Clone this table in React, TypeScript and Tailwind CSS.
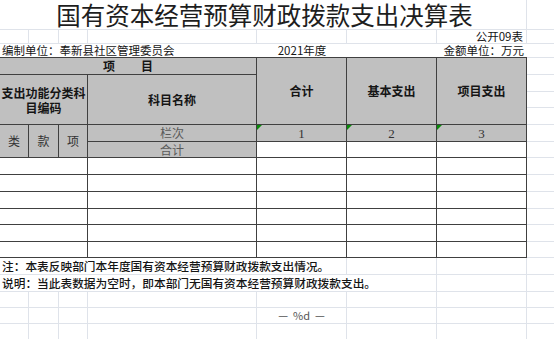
import React from "react";

const L = "border-[#dfe3ea]";
const D = "border-[#404040]";

function GridRow({ h, children }: { h: string; children?: React.ReactNode }) {
  return <div className={`flex ${h}`}>{children}</div>;
}

function Plain({ w, last }: { w: string; last?: boolean }) {
  return <div className={`${w} shrink-0 border-b ${last ? "" : "border-r"} border-[#dfe3ea]`} />;
}

function BlankRow({ h }: { h: string }) {
  return (
    <GridRow h={h}>
      <Plain w="w-[29px]" />
      <Plain w="w-[30px]" />
      <Plain w="w-[29px]" />
      <Plain w="w-[169px]" />
      <Plain w="w-[90px]" />
      <Plain w="w-[90px]" />
      <Plain w="w-[90px]" />
      <Plain w="w-[27px]" last />
    </GridRow>
  );
}

function DataRow({ h }: { h: string }) {
  return (
    <div className={`flex ${h}`}>
      <div className="w-[88px] shrink-0 border-r border-b border-[#404040]" />
      <div className="w-[169px] shrink-0 border-r border-b border-[#404040]" />
      <div className="w-[90px] shrink-0 border-r border-b border-[#404040]" />
      <div className="w-[90px] shrink-0 border-r border-b border-[#404040]" />
      <div className="w-[90px] shrink-0 border-r border-b border-[#404040]" />
      <div className="w-[27px] shrink-0 border-b border-[#dfe3ea]" />
    </div>
  );
}

function Tri() {
  return (
    <span className="absolute left-0 top-0 w-0 h-0 border-t-[5px] border-r-[5px] border-t-[#0a8a0a] border-r-transparent" />
  );
}

export default function App() {
  return (
    <div className="w-[554px] h-[339px] overflow-hidden bg-white text-[#151515] font-['Noto_Sans_CJK_SC','Noto_Sans',sans-serif] leading-none">
      {/* title */}
      <div className="flex h-[30px]">
        <div className={`w-[527px] shrink-0 border-r border-b ${L} flex items-center justify-center pl-[3px] pt-[1px] text-[24.5px] leading-[28px] text-[#1e1e1e]`}>
          国有资本经营预算财政拨款支出决算表
        </div>
        <div className={`w-[27px] shrink-0 border-b ${L}`} />
      </div>

      {/* 公开09表 */}
      <div className="flex h-[14px] text-[11.5px] leading-[13px]">
        <Plain w="w-[29px]" />
        <Plain w="w-[30px]" />
        <Plain w="w-[29px]" />
        <Plain w="w-[169px]" />
        <Plain w="w-[90px]" />
        <Plain w="w-[90px]" />
        <div className={`w-[90px] shrink-0 border-r border-b ${L} flex items-center justify-end pr-[3px]`}>公开09表</div>
        <Plain w="w-[27px]" last />
      </div>

      {/* 编制单位 */}
      <div className="flex h-[14px] text-[11.5px] leading-[13px]">
        <div className={`w-[257px] shrink-0 border-b ${D} flex items-center pl-[2px] whitespace-nowrap`}>
          编制单位：奉新县社区管理委员会
        </div>
        <div className={`w-[90px] shrink-0 border-b ${D} flex items-center justify-center`}>2021年度</div>
        <div className={`w-[90px] shrink-0 border-b ${D}`} />
        <div className={`w-[90px] shrink-0 border-b ${D} flex items-center justify-end pr-[3px] whitespace-nowrap`}>金额单位：万元</div>
        <div className={`w-[27px] shrink-0 border-b ${L}`} />
      </div>

      {/* header block */}
      <div className="flex h-[100px] text-[12px] font-bold">
        <div className="w-[257px] shrink-0 flex flex-col">
          <div className={`h-[17px] bg-[#c0c0c0] border-r border-b ${D} flex items-center justify-center gap-[26px]`}>
            <span>项</span>
            <span>目</span>
          </div>
          <div className="flex h-[50px]">
            <div className={`w-[88px] shrink-0 bg-[#c0c0c0] border-r border-b ${D} flex items-center justify-center text-center leading-[15px] px-[1px]`}>
              支出功能分类科目编码
            </div>
            <div className={`w-[169px] shrink-0 bg-[#c0c0c0] border-r border-b ${D} flex items-center justify-center`}>
              科目名称
            </div>
          </div>
          <div className="flex h-[33px] font-normal">
            <div className={`w-[29px] shrink-0 bg-[#c0c0c0] border-r border-b ${D} flex items-center justify-center text-[#333]`}>类</div>
            <div className={`w-[30px] shrink-0 bg-[#c0c0c0] border-r border-b ${D} flex items-center justify-center text-[#333]`}>款</div>
            <div className={`w-[29px] shrink-0 bg-[#c0c0c0] border-r border-b ${D} flex items-center justify-center text-[#333]`}>项</div>
            <div className="w-[169px] shrink-0 flex flex-col text-[#5a5a5a]">
              <div className={`h-[17px] bg-[#c0c0c0] border-r border-b ${D} flex items-center justify-center`}>栏次</div>
              <div className={`h-[16px] bg-[#c0c0c0] border-r border-b ${D} flex items-center justify-center`}>合计</div>
            </div>
          </div>
        </div>

        <div className="w-[270px] shrink-0 flex flex-col">
          <div className="flex h-[67px]">
            <div className={`w-[90px] shrink-0 bg-[#c0c0c0] border-r border-b ${D} flex items-center justify-center`}>合计</div>
            <div className={`w-[90px] shrink-0 bg-[#c0c0c0] border-r border-b ${D} flex items-center justify-center`}>基本支出</div>
            <div className={`w-[90px] shrink-0 bg-[#c0c0c0] border-r border-b ${D} flex items-center justify-center`}>项目支出</div>
          </div>
          <div className="flex h-[17px] font-normal text-[#333] font-['Liberation_Serif',serif] text-[13px]">
            <div className={`relative w-[90px] shrink-0 bg-[#c0c0c0] border-r border-b ${D} flex items-center justify-center`}>
              <Tri />1
            </div>
            <div className={`relative w-[90px] shrink-0 bg-[#c0c0c0] border-r border-b ${D} flex items-center justify-center`}>
              <Tri />2
            </div>
            <div className={`relative w-[90px] shrink-0 bg-[#c0c0c0] border-r border-b ${D} flex items-center justify-center`}>
              <Tri />3
            </div>
          </div>
          <div className="flex h-[16px]">
            <div className={`w-[90px] shrink-0 border-r border-b ${D}`} />
            <div className={`w-[90px] shrink-0 border-r border-b ${D}`} />
            <div className={`w-[90px] shrink-0 border-r border-b ${D}`} />
          </div>
        </div>

        <div className="w-[27px] shrink-0 flex flex-col">
          <div className={`h-[17px] border-b ${L}`} />
          <div className={`h-[17px] border-b ${L}`} />
          <div className={`h-[16px] border-b ${L}`} />
          <div className={`h-[17px] border-b ${L}`} />
          <div className={`h-[17px] border-b ${L}`} />
          <div className={`h-[16px] border-b ${L}`} />
        </div>
      </div>

      {/* data rows */}
      <DataRow h="h-[17px]" />
      <DataRow h="h-[17px]" />
      <DataRow h="h-[17px]" />
      <DataRow h="h-[16px]" />
      <DataRow h="h-[17px]" />
      <DataRow h="h-[16px]" />

      {/* notes */}
      <div className="flex h-[17px] text-[11.7px] font-medium">
        <div className={`w-[347px] shrink-0 border-r border-b ${L} flex items-center pl-[2px] whitespace-nowrap`}>
          注：本表反映部门本年度国有资本经营预算财政拨款支出情况。
        </div>
        <Plain w="w-[90px]" />
        <Plain w="w-[90px]" />
        <Plain w="w-[27px]" last />
      </div>
      <div className="flex h-[17px] text-[11.7px] font-medium">
        <div className={`w-[437px] shrink-0 border-r border-b ${L} flex items-center pl-[2px] whitespace-nowrap`}>
          说明：当此表数据为空时，即本部门无国有资本经营预算财政拨款支出。
        </div>
        <Plain w="w-[90px]" />
        <Plain w="w-[27px]" last />
      </div>
      <BlankRow h="h-[16px]" />
      <div className="flex h-[16px]">
        <Plain w="w-[29px]" />
        <Plain w="w-[30px]" />
        <Plain w="w-[29px]" />
        <Plain w="w-[169px]" />
        <div className={`w-[90px] shrink-0 border-r border-b ${L} flex items-center justify-center gap-[5px] text-[11px] text-[#555] whitespace-nowrap`}>
          <span>—</span>
          <span>%d</span>
          <span>—</span>
        </div>
        <Plain w="w-[90px]" />
        <Plain w="w-[90px]" />
        <Plain w="w-[27px]" last />
      </div>
      <BlankRow h="h-[16px]" />
    </div>
  );
}
